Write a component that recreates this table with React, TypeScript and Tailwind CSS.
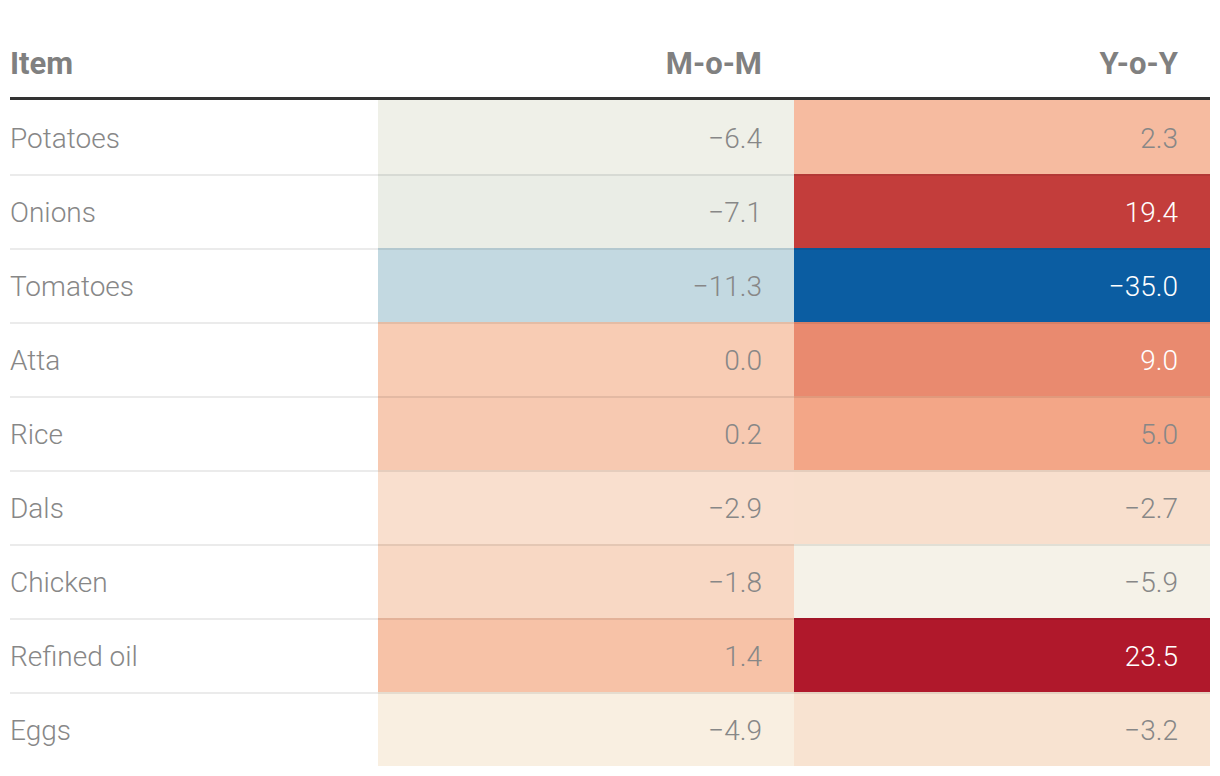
const rows = [
    { item: "Potatoes", mom: "−6.4", momBg: "bg-[#eff0e8]", yoy: "2.3", yoyBg: "bg-[#f6bba0]", yoyDark: false },
    { item: "Onions", mom: "−7.1", momBg: "bg-[#eaede6]", yoy: "19.4", yoyBg: "bg-[#c33d3b]", yoyDark: true },
    { item: "Tomatoes", mom: "−11.3", momBg: "bg-[#c3d9e1]", yoy: "−35.0", yoyBg: "bg-[#0b5da2]", yoyDark: true },
    { item: "Atta", mom: "0.0", momBg: "bg-[#f8ccb4]", yoy: "9.0", yoyBg: "bg-[#e98a6f]", yoyDark: true },
    { item: "Rice", mom: "0.2", momBg: "bg-[#f7c9b1]", yoy: "5.0", yoyBg: "bg-[#f3a687]", yoyDark: false },
    { item: "Dals", mom: "−2.9", momBg: "bg-[#f9dfce]", yoy: "−2.7", yoyBg: "bg-[#f8dfcd]", yoyDark: false },
    { item: "Chicken", mom: "−1.8", momBg: "bg-[#f8d8c4]", yoy: "−5.9", yoyBg: "bg-[#f5f2e8]", yoyDark: false },
    { item: "Refined oil", mom: "1.4", momBg: "bg-[#f7c2a7]", yoy: "23.5", yoyBg: "bg-[#b0182b]", yoyDark: true },
    { item: "Eggs", mom: "−4.9", momBg: "bg-[#f9efe1]", yoy: "−3.2", yoyBg: "bg-[#f8e3d1]", yoyDark: false },
];

export default function App() {
    return (
        <main className="min-h-screen bg-white px-[10px] font-['Roboto','Liberation_Sans',sans-serif]">
            <div className="grid grid-cols-[368px_416px_416px] h-[100px] pt-[32px] items-center text-[31px] font-bold text-[#808080] border-b-[3px] border-[#333333]">
                <div>Item</div>
                <div className="text-right pr-[32px]">M-o-M</div>
                <div className="text-right pr-[32px]">Y-o-Y</div>
            </div>
            {rows.map((r, i) => {
                // first row sits right under the thick rule, the rest get a thin top border
                const edge = i > 0 ? " border-t-2 pt-[1px]" : " pt-[3px]";
                return (
                    <div
                        key={r.item}
                        className="grid grid-cols-[368px_416px_416px] h-[74px] text-[28px] font-light text-[#878787]">
                        <div className={"flex items-center border-black/[0.08]" + edge}>
                            {r.item}
                        </div>
                        <div
                            className={
                                "flex items-center justify-end pr-[32px] border-black/[0.08] " +
                                r.momBg +
                                edge
                            }>
                            {r.mom}
                        </div>
                        <div
                            className={
                                "flex items-center justify-end pr-[32px] border-black/[0.08] " +
                                r.yoyBg +
                                (r.yoyDark ? " text-white" : "") +
                                edge
                            }>
                            {r.yoy}
                        </div>
                    </div>
                );
            })}
        </main>
    );
}
